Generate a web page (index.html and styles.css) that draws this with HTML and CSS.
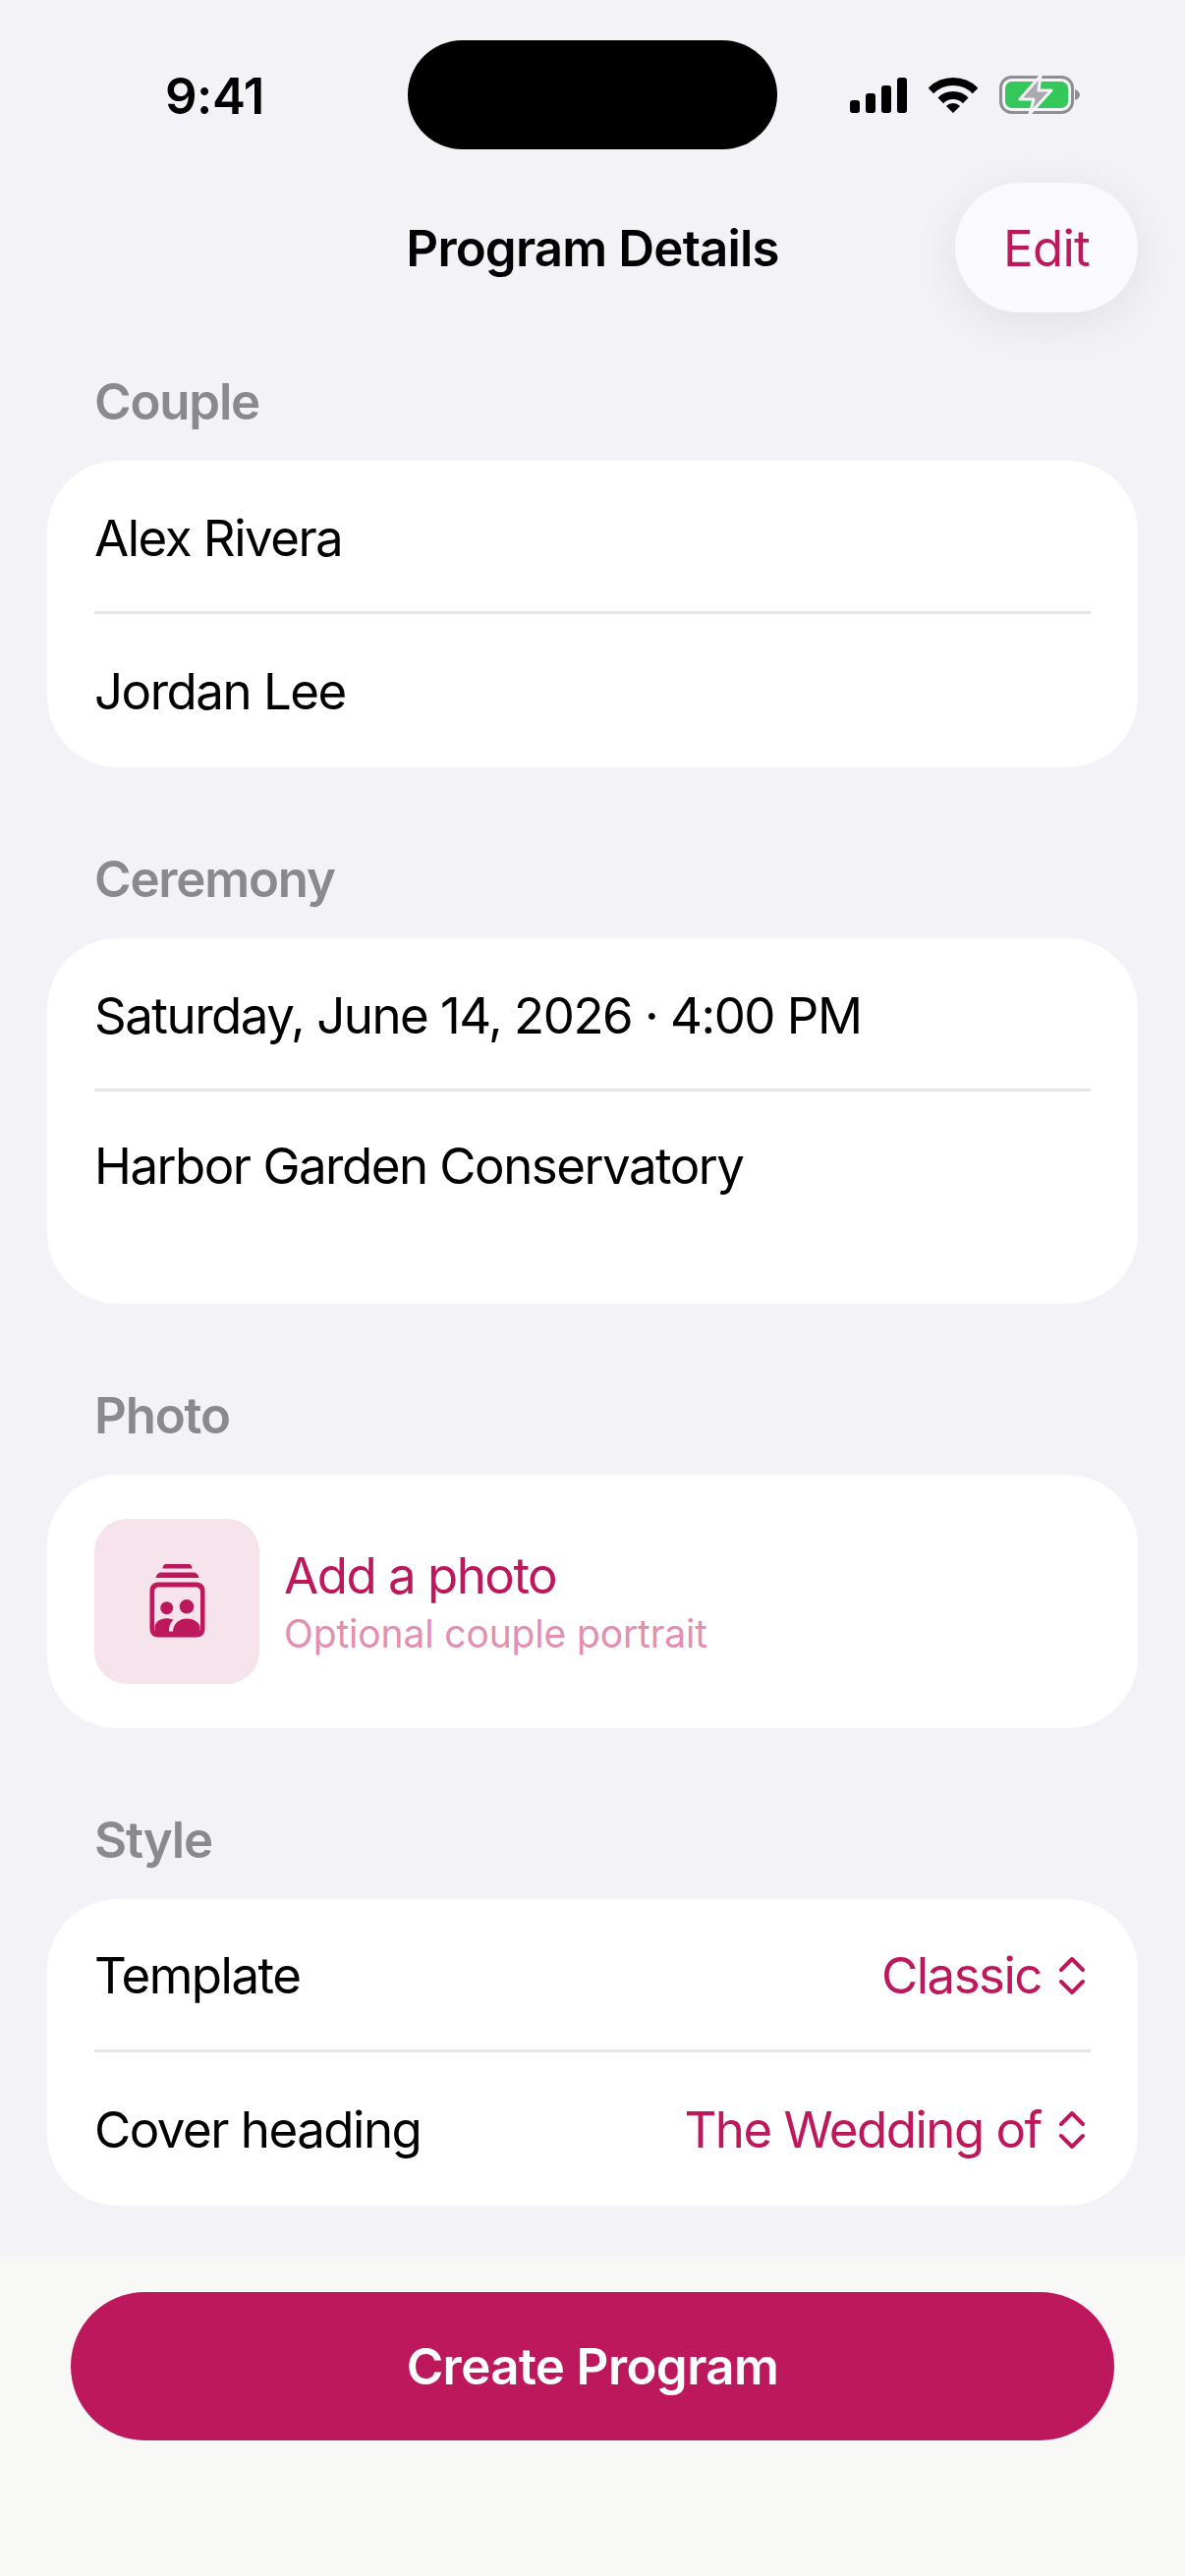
FILE: index.html
```html
<!DOCTYPE html>
<html lang="en">
<head>
    <meta charset="UTF-8">
    <meta name="viewport" content="width=device-width, initial-scale=1.0">
    <title>Program Details</title>
    <link rel="stylesheet" href="styles.css">
</head>
<body>

<div class="status-bar">
    <span class="status-time">9:41</span>
    <div class="island"></div>
    <div class="status-icons">
        <svg width="58" height="36" viewBox="0 0 58 36" fill="#000">
            <rect x="0" y="23" width="10" height="13" rx="3"/>
            <rect x="16" y="16" width="10" height="20" rx="3"/>
            <rect x="32" y="8" width="10" height="28" rx="3"/>
            <rect x="48" y="0" width="10" height="36" rx="3"/>
        </svg>
        <svg width="50" height="36" viewBox="0 0 50 36" fill="none" stroke="#000" stroke-width="8">
            <path d="M2.4 13.4A32 32 0 0 1 47.6 13.4"/>
            <path d="M12.3 23.3A18 18 0 0 1 37.7 23.3"/>
            <path d="M25 36L17.9 28.9A10 10 0 0 1 32.1 28.9Z" fill="#000" stroke="none"/>
        </svg>
        <svg width="82" height="40" viewBox="0 0 82 40">
            <rect x="1.5" y="1.5" width="73" height="36" rx="11" fill="none" stroke="#8e8e93" stroke-width="3"/>
            <rect x="6" y="6" width="64" height="27" rx="7" fill="#34c759"/>
            <path d="M77 14c3 1 5 3 5 5.500s-2 4.500-5 5.500Z" fill="#8e8e93"/>
            <path d="M42 0L21 24H35L31 39L53 15H40Z" fill="#a9a9ae" stroke="#f2f2f7" stroke-width="3" stroke-linejoin="round"/>
        </svg>
    </div>
</div>

<div class="nav-bar">
    <span></span>
    <h1 class="nav-title">Program Details</h1>
    <button class="edit-button">Edit</button>
</div>

<main class="form">
    <section class="group">
        <h2 class="group-label">Couple</h2>
        <div class="card">
            <div class="row">Alex Rivera</div>
            <div class="divider"></div>
            <div class="row row-last">Jordan Lee</div>
        </div>
    </section>

    <section class="group">
        <h2 class="group-label">Ceremony</h2>
        <div class="card">
            <div class="row">Saturday, June 14, 2026 · 4:00 PM</div>
            <div class="divider"></div>
            <div class="row row-tall">Harbor Garden Conservatory</div>
        </div>
    </section>

    <section class="group">
        <h2 class="group-label">Photo</h2>
        <div class="card photo-card">
            <div class="photo-thumb">
                <svg width="57" height="76" viewBox="0 0 57 76" fill="#be185d">
                    <path d="M13.500 4.500C13.500 2 15 0 17 0H40C42 0 43.500 2 43.500 4.500Z"/>
                    <path d="M6.500 14C7 11 9 8.500 12 8.500H45C48 8.500 50 11 50.500 14Z"/>
                    <path fill-rule="evenodd" d="M9 18.500H48C53 18.500 56.500 22 56.500 27V66C56.500 71 53 74.500 48 74.500H9C4 74.500 .5 71 .5 66V27C.5 22 4 18.500 9 18.500ZM10 23.500C7 23.500 5 25.500 5 28.500V65C5 68 7 70 10 70H47C50 70 52 68 52 65V28.500C52 25.500 50 23.500 47 23.500Z"/>
                    <rect x="5" y="68.500" width="47" height="2"/>
                    <circle cx="17.700" cy="44.700" r="6.500"/>
                    <circle cx="38" cy="43.300" r="7.300"/>
                    <path d="M5.500 69V65C5.500 59 11 55.300 17.500 55.300C20 55.300 22 55.800 24.500 56.800C21.500 59.500 20 63 20 69Z"/>
                    <path d="M24 69C24 61 30 55.500 38 55.500C46 55.500 51.500 60 51.500 65V69Z"/>
                </svg>
            </div>
            <div class="photo-text">
                <div class="photo-title">Add a photo</div>
                <div class="photo-sub">Optional couple portrait</div>
            </div>
        </div>
    </section>

    <section class="group">
        <h2 class="group-label">Style</h2>
        <div class="card">
            <div class="row row-picker">
                <span>Template</span>
                <span class="picker">Classic
                    <svg class="chevrons" width="32" height="38" viewBox="0 0 32 38"><path d="M2 13L13 2L24 13M2 25L13 36L24 25"/></svg>
                </span>
            </div>
            <div class="divider"></div>
            <div class="row row-last row-picker">
                <span>Cover heading</span>
                <span class="picker">The Wedding of
                    <svg class="chevrons" width="32" height="38" viewBox="0 0 32 38"><path d="M2 13L13 2L24 13M2 25L13 36L24 25"/></svg>
                </span>
            </div>
        </div>
    </section>
</main>

<footer class="footer">
    <button class="create-button">Create Program</button>
</footer>

</body>
</html>
```

FILE: styles.css
```css
body {
    margin: 0;
    height: 2622px;
    overflow: hidden;
    display: flex;
    flex-direction: column;
    background-color: #f2f2f7;
    color: #000;
    font-family: Inter, "Noto Sans", sans-serif;
}
.status-bar {
    height: 186px;
    padding: 41px 48px 0 168px;
    box-sizing: border-box;
    display: flex;
    align-items: flex-start;
}
.status-time {
    width: 102px;
    margin-top: 26px;
    font-size: 51px;
    line-height: 62px;
    font-weight: 600;
    letter-spacing: -0.5px;
}
.island {
    width: 376px;
    height: 111px;
    margin-left: 145px;
    border-radius: 56px;
    background-color: #000;
}
.status-icons {
    display: flex;
    align-items: center;
    gap: 22px;
    margin-left: 74px;
    margin-top: 36px;
}
.nav-bar {
    display: grid;
    grid-template-columns: 1fr auto 1fr;
    align-items: center;
    height: 132px;
    padding: 0 48px;
}
.nav-title {
    margin: 0;
    padding-top: 2px;
    font-size: 51px;
    line-height: 62px;
    font-weight: 600;
    letter-spacing: -0.85px;
}
.edit-button {
    justify-self: end;
    width: 186px;
    height: 132px;
    border: none;
    border-radius: 66px;
    background-color: #faf9fe;
    color: #be185d;
    font-family: inherit;
    font-size: 51px;
    letter-spacing: -0.7px;
    box-shadow: 0 10px 50px rgba(0, 0, 0, 0.08);
}
.form {
    padding: 61px 48px 0;
}
.group {
    margin-bottom: 84px;
}
.group:last-child {
    margin-bottom: 0;
}
.group-label {
    margin: 0 0 30px 48px;
    font-size: 51px;
    line-height: 60px;
    font-weight: 600;
    letter-spacing: -1.2px;
    color: #8a8a8e;
}
.card {
    border-radius: 72px;
    background-color: #fff;
    padding: 0 48px;
    font-size: 51px;
    letter-spacing: -1.5px;
}
.row {
    height: 153px;
    line-height: 62px;
    padding-top: 48px;
    box-sizing: border-box;
}
.row-last {
    height: 156px;
}
.row-tall {
    height: 216px;
    padding-top: 45px;
}
.row-picker {
    display: flex;
    justify-content: space-between;
    align-items: center;
    padding-top: 2px;
}
.divider {
    height: 3px;
    background-color: #e6e6e8;
}
.photo-card {
    display: flex;
    align-items: center;
    gap: 25px;
    height: 258px;
}
.photo-thumb {
    width: 168px;
    height: 168px;
    border-radius: 33px;
    background-color: #f6e3ec;
    display: flex;
    align-items: center;
    justify-content: center;
}
.photo-text {
    padding-top: 3px;
}
.photo-title {
    font-size: 51px;
    line-height: 62px;
    color: #be185d;
}
.photo-sub {
    font-size: 39px;
    line-height: 56px;
    letter-spacing: -0.15px;
    color: #e38fb0;
}
.picker {
    display: flex;
    align-items: center;
    gap: 18px;
    color: #be185d;
}
.chevrons {
    fill: none;
    stroke: #be185d;
    stroke-width: 4;
    stroke-linecap: round;
    stroke-linejoin: round;
}
.footer {
    margin-top: auto;
    height: 325px;
    box-sizing: border-box;
    padding: 36px 72px 0;
    background-color: #f8f8f7;
}
.create-button {
    display: block;
    width: 100%;
    height: 151px;
    border: none;
    border-radius: 76px;
    background-color: #be185d;
    color: #fff;
    font-family: inherit;
    font-size: 51px;
    font-weight: 600;
    letter-spacing: -0.6px;
}
```
